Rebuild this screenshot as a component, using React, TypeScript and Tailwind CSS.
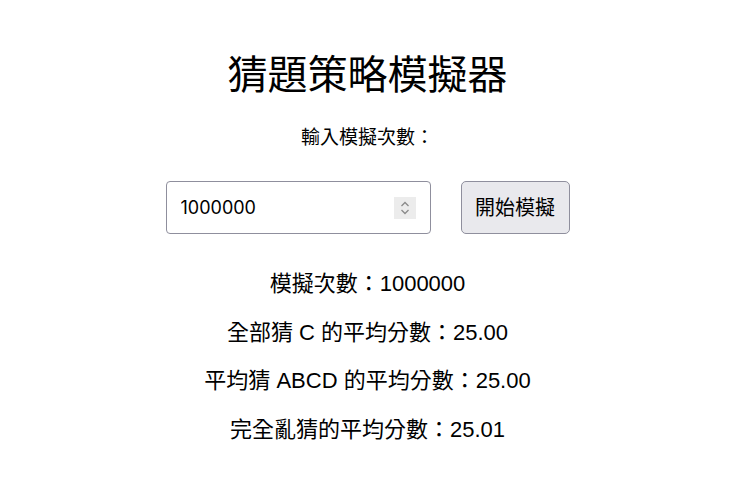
import React, { useState } from "react";

export default function App() {
  const [n, setN] = useState("1000000");
  const cjk = { fontFamily: '"Liberation Sans", "Noto Sans CJK TC", sans-serif' };
  return (
    <div className="min-h-[490px] w-full bg-white text-black flex flex-col items-center" style={cjk}>
      <h1
        className="mt-[52px] text-[40px] leading-[48px] font-normal"
        style={{ fontFamily: '"Liberation Serif", "Noto Sans CJK TC", serif' }}
      >
        猜題策略模擬器
      </h1>
      <label className="mt-[25px] text-[19px] leading-[26px]">輸入模擬次數：</label>
      <div className="mt-[30px] flex items-center gap-[30px]">
        <div className="relative">
          <input
            type="text"
            value={n}
            onChange={(e) => setN(e.target.value)}
            className="w-[265px] h-[53px] border border-[#8f8f9d] rounded-[4px] pl-[14px] pr-[40px] text-[18px] outline-none bg-white"
            style={{ fontFamily: '"Inter", "Noto Sans CJK TC", sans-serif' }}
          />
          <div className="absolute right-[15px] top-[16px] w-[22px] h-[22px] bg-[#ececec] flex items-center justify-center">
            <svg width="10" height="16" viewBox="0 0 10 16" fill="none" stroke="#8a8a8a" strokeWidth="1.3">
              <path d="M1.5 6 L5 2.5 L8.5 6" />
              <path d="M1.5 10 L5 13.5 L8.5 10" />
            </svg>
          </div>
        </div>
        <button className="h-[53px] w-[109px] bg-[#e9e9ed] border border-[#8f8f9d] rounded-[5px] text-[20px]">
          開始模擬
        </button>
      </div>
      <div className="mt-[36px] flex flex-col items-center gap-[20px] text-[22px] leading-[28.5px]">
        <p>模擬次數：1000000</p>
        <p>全部猜 C 的平均分數：25.00</p>
        <p>平均猜 ABCD 的平均分數：25.00</p>
        <p>完全亂猜的平均分數：25.01</p>
      </div>
    </div>
  );
}
